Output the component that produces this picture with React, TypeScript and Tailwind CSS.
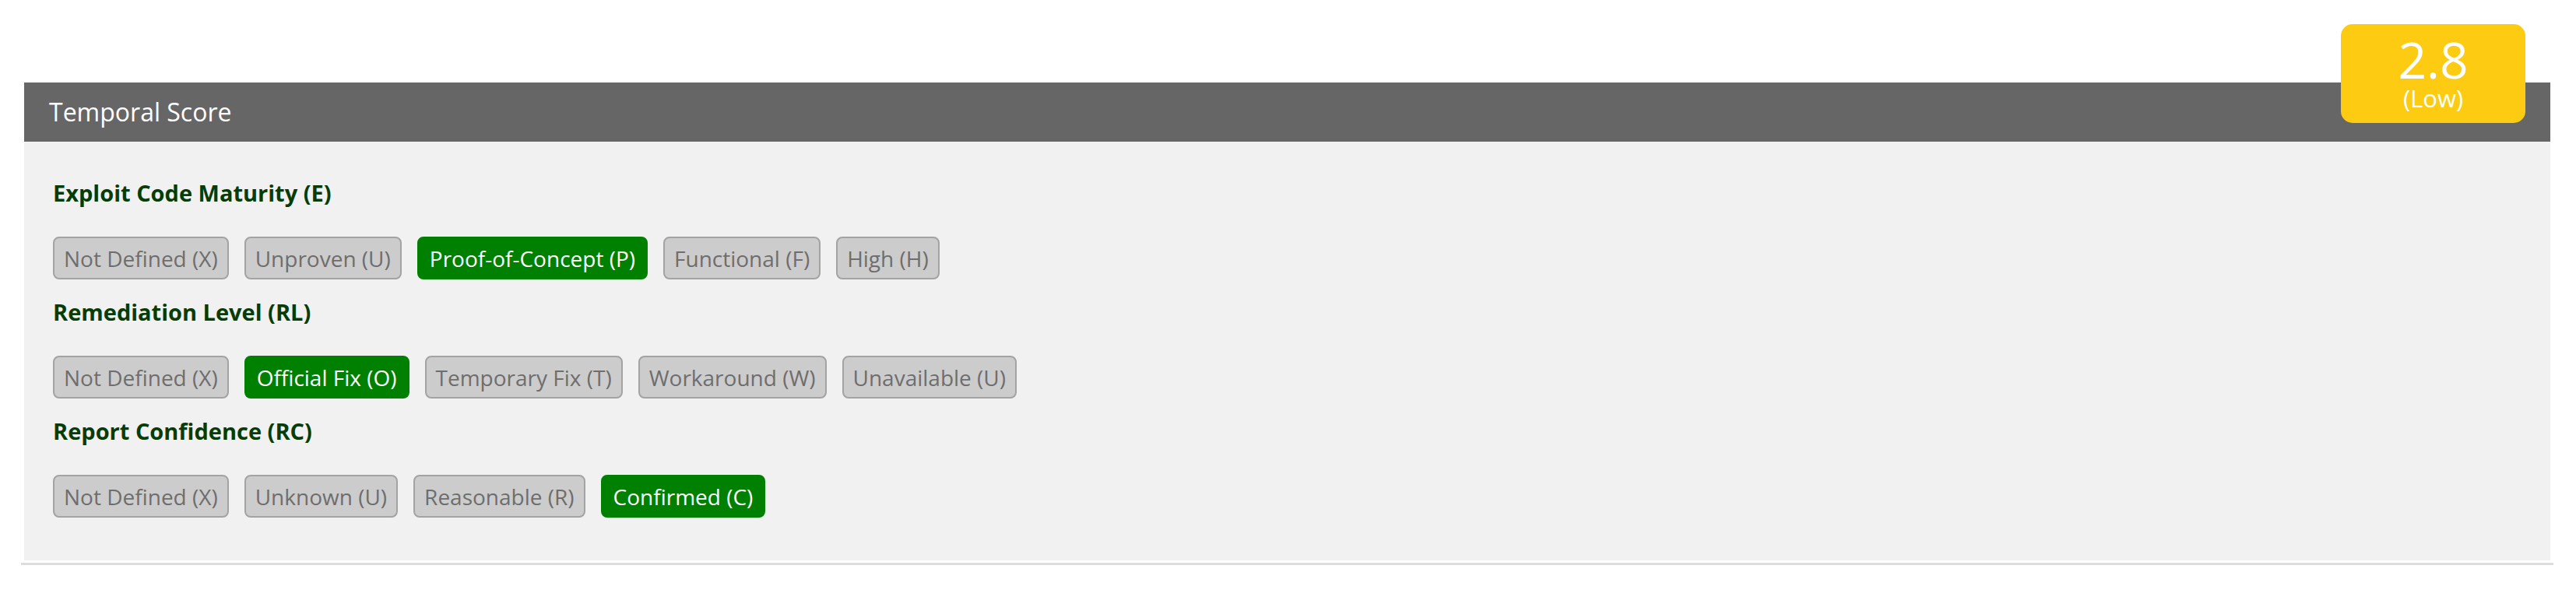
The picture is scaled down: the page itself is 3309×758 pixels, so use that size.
import React from 'react';

type Metric = {
    title: string
    options: string[]
    selected: number
}

const metrics: Metric[] = [
    {
        title: 'Exploit Code Maturity (E)',
        options: ['Not Defined (X)', 'Unproven (U)', 'Proof-of-Concept (P)', 'Functional (F)', 'High (H)'],
        selected: 2,
    },
    {
        title: 'Remediation Level (RL)',
        options: ['Not Defined (X)', 'Official Fix (O)', 'Temporary Fix (T)', 'Workaround (W)', 'Unavailable (U)'],
        selected: 1,
    },
    {
        title: 'Report Confidence (RC)',
        options: ['Not Defined (X)', 'Unknown (U)', 'Reasonable (R)', 'Confirmed (C)'],
        selected: 3,
    },
];

function OptionButton({ label, active }: { label: string, active: boolean }) {
    if (active) {
        return (
            <button type="button" className="h-[55px] px-[14px] rounded-[8px] border-2 border-[#008000] bg-[#008000] text-white text-[28px] leading-none whitespace-nowrap">
                {label}
            </button>
        );
    }
    return (
        <button type="button" className="h-[55px] px-[12px] rounded-[8px] border-2 border-[#a3a3a3] bg-[#cccccc] text-[#6e6e6e] text-[28px] leading-none whitespace-nowrap">
            {label}
        </button>
    );
}

export default function App() {
    return (
        <div className="min-h-[758px] bg-white pt-[106px] pl-[31px] pr-[33px] font-['Open_Sans','Liberation_Sans',sans-serif]">
            <div className="relative">
                {/* score badge */}
                <div className="absolute -top-[75px] right-[32px] w-[237px] h-[127px] rounded-[15px] bg-[#fdcb12] text-white flex flex-col items-center justify-center pb-[2px]">
                    <span className="text-[64px] leading-[64px]">2.8</span>
                    <span className="text-[31px] leading-[34px]">(Low)</span>
                </div>

                <div className="h-[76px] bg-[#666666] flex items-center pl-[32px]">
                    <h3 className="text-white text-[32px] leading-none">Temporal Score</h3>
                </div>

                <div className="bg-[#f1f1f1] pl-[37px] pt-[45px] pb-[55px] flex flex-col">
                    {metrics.map((m, i) => (
                        <div key={m.title} className={i > 0 ? 'mt-[21px]' : ''}>
                            <h4 className="text-[29px] leading-[42px] font-bold text-[#063d06]">{m.title}</h4>
                            <div className="mt-[35px] flex gap-[20px]">
                                {m.options.map((o, j) => (
                                    <OptionButton key={o} label={o} active={j === m.selected} />
                                ))}
                            </div>
                        </div>
                    ))}
                </div>
            </div>
            <div className="mt-[3px] -ml-[4px] -mr-[4px] h-[3px] bg-[#dddddd]"></div>
        </div>
    );
}
